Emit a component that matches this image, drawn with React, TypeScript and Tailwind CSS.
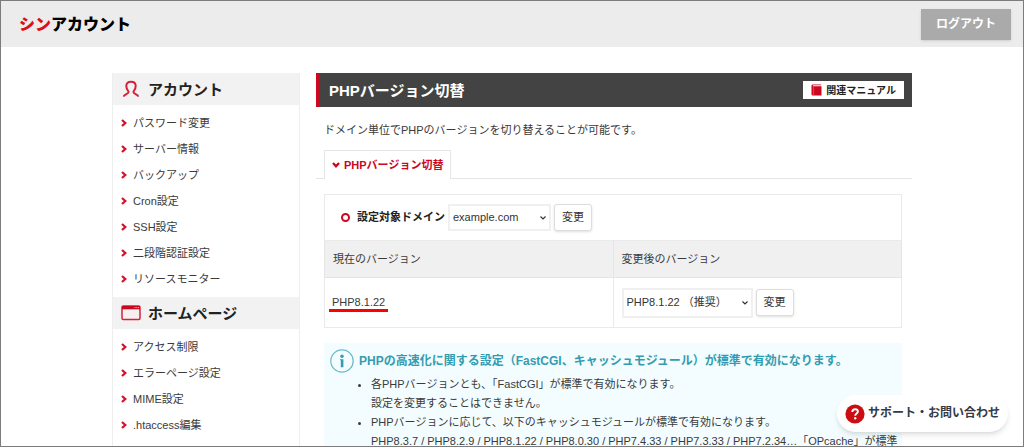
import type { ReactNode } from "react";

const accountLinks = [
  "パスワード変更",
  "サーバー情報",
  "バックアップ",
  "Cron設定",
  "SSH設定",
  "二段階認証設定",
  "リソースモニター",
];

const homepageLinks = [
  "アクセス制限",
  "エラーページ設定",
  "MIME設定",
  ".htaccess編集",
];

function Chevron({ className }: { className?: string }) {
  return (
    <svg viewBox="0 0 6 8" className={className} fill="none" aria-hidden="true">
      <path d="M1 1 4.300 4 1 7" stroke="currentColor" strokeWidth="2.300" />
    </svg>
  );
}

function UserIcon() {
  return (
    <svg viewBox="0 0 18 18" className="h-[18px] w-[18px]" fill="none" aria-hidden="true">
      <path
        d="M1.700 16.600C2 14 6.600 14.200 6.600 12C6.600 10.700 4.300 9.600 4.300 6C4.300 3.200 6.200 1.700 9 1.700S13.700 3.200 13.700 6C13.700 9.600 11.400 10.700 11.400 12C11.400 14.200 16 14 16.300 16.600"
        stroke="#d6203a"
        strokeWidth="2"
      />
    </svg>
  );
}

function WindowIcon() {
  return (
    <svg viewBox="0 0 20 16" className="h-4 w-5" fill="none" aria-hidden="true">
      <rect x="1" y="1" width="18" height="13.600" rx="1.300" fill="#f6f0f1" stroke="#d6203a" strokeWidth="1.500" />
      <path d="M1 1h18v3.300H1z" fill="#cc0720" />
      <path d="M13.500 2.600h1M15.300 2.600h1M17.100 2.600h1" stroke="#f5c6cc" strokeWidth="1" />
    </svg>
  );
}

function BookIcon() {
  return (
    <svg viewBox="0 0 11 12" className="h-3 w-[11px]" aria-hidden="true">
      <path d="M1.700 .5H10v.8H1.900v1H10.500v9.200H1.700Q.5 11.500.5 10.300V1.700Q.5.5 1.700.5z" fill="#cc0720" />
      <path d="M2.600 2.600v8.900" stroke="#e8707f" strokeWidth=".6" />
    </svg>
  );
}

function InfoIcon() {
  return (
    <svg viewBox="0 0 24 24" className="h-6 w-6" aria-hidden="true">
      <circle cx="12" cy="12" r="11.200" fill="none" stroke="#6bb9c9" strokeWidth="1.200" />
      <circle cx="12" cy="7.200" r="1.700" fill="#349cb0" />
      <path d="M10 10.200h3.400v8h-2.600v-7H10z" fill="#349cb0" />
    </svg>
  );
}

function HelpIcon() {
  return (
    <svg viewBox="0 0 20 20" className="h-5 w-5" fill="none" aria-hidden="true">
      <circle cx="10" cy="10" r="9.600" fill="#cc0d12" />
      <path
        d="M7.300 7.900C7.300 6.200 8.400 5.200 10.100 5.200s2.800 1 2.800 2.400c0 2-2.700 2-2.700 4.200"
        stroke="white"
        strokeWidth="1.900"
      />
      <circle cx="10.200" cy="14.200" r="1.200" fill="white" />
    </svg>
  );
}

function MenuSection({
  title,
  icon,
  links,
}: {
  title: string;
  icon: ReactNode;
  links: string[];
}) {
  return (
    <section>
      <h2 className="flex h-8 items-center bg-[#f2f2f2] pl-[7px] text-[15px] font-bold text-[#222]">
        <span className="mr-1.5 flex w-[22px] justify-center">{icon}</span>
        {title}
      </h2>
      <ul className="py-[5px]">
        {links.map((link) => (
          <li key={link}>
            <a href="#" className="flex h-[26px] items-center gap-1.5 pl-2 hover:underline">
              <Chevron className="h-2 w-1.5 text-[#d2142e]" />
              {link}
            </a>
          </li>
        ))}
      </ul>
    </section>
  );
}

function Select({
  id,
  label,
  className,
  children,
}: {
  id: string;
  label?: string;
  className: string;
  children: ReactNode;
}) {
  return (
    <span className="relative inline-flex">
      <select
        id={id}
        aria-label={label}
        className={`appearance-none border-2 border-[#f0f0f0] bg-white pl-[3px] text-[11px] text-[#333] ${className}`}
      >
        {children}
      </select>
      <svg
        viewBox="0 0 8 6"
        className="pointer-events-none absolute top-1/2 right-1 h-1.5 w-2 -translate-y-1/2"
        fill="none"
        aria-hidden="true"
      >
        <path d="M1.500 1.500 4 4l2.500-2.500" stroke="#333" strokeWidth="1.200" />
      </svg>
    </span>
  );
}

function ChangeButton() {
  return (
    <button
      type="button"
      className="h-[27px] rounded-[3px] border border-[#ddd] bg-white px-[7px] text-[#333] shadow-sm"
    >
      変更
    </button>
  );
}

export default function App() {
  return (
    <div className="relative h-screen overflow-hidden border border-[#7c7c7c] bg-white font-['Liberation_Sans','Noto_Sans_CJK_JP',sans-serif] text-[11px] leading-[19px] text-[#3a3a3a]">
      <header className="flex h-[46px] items-center justify-between bg-[#ececec] pr-3 pl-[18px]">
        <a href="#" className="text-[16px] font-black text-black">
          <span className="text-[#e00d17]">シン</span>アカウント
        </a>
        <button
          type="button"
          className="h-[31px] bg-[#aaa] px-[15px] text-[12px] font-bold text-white shadow"
        >
          ログアウト
        </button>
      </header>

      <div className="mx-auto mt-[26px] flex max-w-[800px] gap-4">
        <nav className="w-[188px] shrink-0 border border-t-0 border-[#eee]">
          <MenuSection title="アカウント" icon={<UserIcon />} links={accountLinks} />
          <MenuSection title="ホームページ" icon={<WindowIcon />} links={homepageLinks} />
        </nav>

        <main className="min-w-0 flex-1">
          <div className="flex h-[34px] items-center justify-between border-l-4 border-[#cc0720] bg-[#434343] pr-2 pl-[9px]">
            <h1 className="text-[15px] font-bold text-white">PHPバージョン切替</h1>
            <a
              href="#"
              className="flex h-[18px] items-center gap-1 bg-white px-2 text-[10px] font-bold text-[#222]"
            >
              <BookIcon />
              関連マニュアル
            </a>
          </div>

          <p className="mt-3.5 px-2">
            ドメイン単位でPHPのバージョンを切り替えることが可能です。
          </p>

          <div className="mt-2.5 border-b border-[#e5e5e5] pl-2" role="tablist">
            <button
              type="button"
              role="tab"
              aria-selected="true"
              className="-mb-px flex h-[29px] items-center gap-1 border border-b-0 border-[#e5e5e5] bg-white px-[7px] font-bold text-[#cc0720]"
            >
              <Chevron className="h-2 w-2 rotate-90" />
              PHPバージョン切替
            </button>
          </div>

          <div className="mt-[15px] mr-[10px] ml-2">
            <table className="w-full table-fixed border-collapse text-left [&_td]:border [&_td]:border-[#eaeaea] [&_th]:border [&_th]:border-[#e5e5e5]">
              <tbody>
                <tr className="h-[46px]">
                  <td colSpan={2} className="pl-4">
                    <div className="flex items-center gap-[3px]">
                      <span className="mr-1 h-[9px] w-[9px] rounded-full border-2 border-[#cc0720]" />
                      <label htmlFor="domain" className="font-bold text-[#222]">
                        設定対象ドメイン
                      </label>
                      <Select id="domain" className="h-[27px] w-[103px]">
                        <option>example.com</option>
                      </Select>
                      <ChangeButton />
                    </div>
                  </td>
                </tr>
                <tr className="h-[37px] bg-[#f0f0f0]">
                  <th className="px-2 font-normal">現在のバージョン</th>
                  <th className="px-2 font-normal">変更後のバージョン</th>
                </tr>
                <tr className="h-[50px]">
                  <td className="px-1">
                    <span className="inline-block border-b-3 border-[#f00] px-[3px] leading-[14px]">
                      PHP8.1.22
                    </span>
                  </td>
                  <td className="px-2">
                    <div className="flex items-center gap-[3px]">
                      <Select id="version" label="変更後のバージョン" className="h-[30px] w-[131px]">
                        <option>PHP8.1.22 （推奨）</option>
                      </Select>
                      <ChangeButton />
                    </div>
                  </td>
                </tr>
              </tbody>
            </table>

            <section className="mt-[15px] bg-[#f3fdff] px-1.5 pt-1.5 pb-4">
              <h2 className="flex h-6 items-center gap-[5px] text-[12px] font-bold text-[#349cb0]">
                <InfoIcon />
                PHPの高速化に関する設定（FastCGI、キャッシュモジュール）が標準で有効になります。
              </h2>
              <ul className="mt-0.5 list-disc pl-[41px] whitespace-nowrap">
                <li>
                  各PHPバージョンとも、「FastCGI」が標準で有効になります。
                  <br />
                  設定を変更することはできません。
                </li>
                <li>
                  PHPバージョンに応じて、以下のキャッシュモジュールが標準で有効になります。
                  <br />
                  PHP8.3.7 / PHP8.2.9 / PHP8.1.22 / PHP8.0.30 / PHP7.4.33 / PHP7.3.33 / PHP7.2.34…「OPcache」が標準
                </li>
              </ul>
            </section>
          </div>
        </main>
      </div>

      <a
        href="#"
        className="absolute right-[15px] bottom-3.5 flex h-[37px] items-center gap-[3px] rounded-full bg-white px-2 text-[12px] font-bold text-[#333b48] shadow-md"
      >
        <HelpIcon />
        サポート・お問い合わせ
      </a>
    </div>
  );
}
